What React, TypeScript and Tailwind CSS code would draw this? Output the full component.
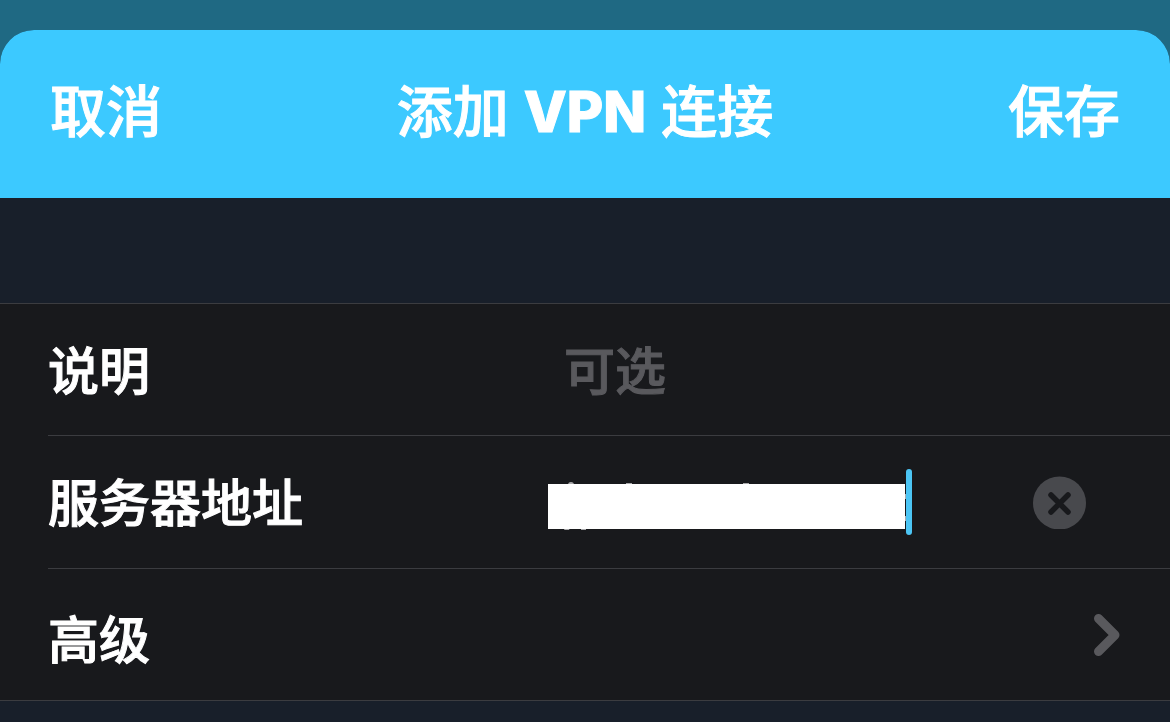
import { useState } from "react";

const fontStack = "font-['Inter','Noto_Sans_CJK_SC',sans-serif]";

function ClearIcon() {
  return (
    <svg viewBox="0 0 54 54" className="size-[54px]" aria-hidden="true">
      <circle cx="27.5" cy="28" r="26.5" fill="#48494d" />
      <path d="M19 20 36 37M36 20 19 37" stroke="#18191c" strokeWidth="5.5" strokeLinecap="round" />
    </svg>
  );
}

function ChevronIcon() {
  return (
    <svg viewBox="0 0 26 42" className="w-[26px] h-[42px]" fill="none" aria-hidden="true">
      <path d="M4.5 4.5 21 21 4.5 37.5" stroke="#59595d" strokeWidth="9" strokeLinecap="round" strokeLinejoin="round" />
    </svg>
  );
}

export default function App() {
  const [description, setDescription] = useState("");
  const [server, setServer] = useState("");

  return (
    <div className={`min-h-screen flex flex-col bg-[#1f6983] pt-[30px] text-white [-webkit-text-stroke:1px] ${fontStack}`}>
      <main className="flex-1 flex flex-col rounded-t-[34px] overflow-hidden bg-[#181f2a]">
        {/* Navigation bar */}
        <header className="flex items-center justify-between h-[168px] px-[50px] pb-1 bg-[#3cc9ff] text-[56px] leading-[80px]">
          <button type="button" className="font-medium">取消</button>
          <h1 className="font-medium">
            添加 <span className="font-extrabold">VPN</span> 连接
          </h1>
          <button type="button" className="font-medium">保存</button>
        </header>

        {/* Connection settings */}
        <form className="mt-[105px] border-y border-[#3b3c40] bg-[#18191c] pl-12 text-[51px] leading-[72px] font-medium">
          <div className="flex items-center h-[132px] border-b border-[#3b3c40]">
            <label htmlFor="description" className="w-[46%] pt-1">说明</label>
            <input
              id="description"
              type="text"
              value={description}
              onChange={(e) => setDescription(e.target.value)}
              placeholder="可选"
              className="flex-1 min-w-0 h-[76px] pt-1 bg-transparent outline-none placeholder:text-[#59595d]"
            />
          </div>

          <div className="flex items-center h-[133px] border-b border-[#3b3c40]">
            <label htmlFor="server" className="w-[46%] pt-1">服务器地址</label>
            <div className="relative flex items-center -ml-4">
              {/* slivers of the address left outside the cover */}
              <svg viewBox="0 0 364 66" className="absolute left-0 w-[364px] h-[66px]" fill="#a9a9ab" aria-hidden="true">
                <path d="M20 16Q20 13 23 13T26 16ZM78 14h6v2h-6ZM195 14h6v2h-6ZM17 59h5l-1 2h-5ZM33 59h5v2h-5Z" />
                <path d="M356 25h3v5h-3ZM356 47h3v5h-3Z" />
              </svg>
              <input
                id="server"
                type="text"
                value={server}
                onChange={(e) => setServer(e.target.value)}
                className="relative mt-2 w-[357px] h-[45px] bg-white text-white outline-none"
              />
              <span className="relative ml-px w-[6px] h-[66px] rounded-full bg-[#4cc5f4]" />
            </div>
            <button type="button" aria-label="清除" className="ml-auto mr-[84px]">
              <ClearIcon />
            </button>
          </div>

          <button type="button" className="flex items-center justify-between w-full h-[131px] pr-[50px]">
            <span className="pt-3">高级</span>
            <ChevronIcon />
          </button>
        </form>
      </main>
    </div>
  );
}
